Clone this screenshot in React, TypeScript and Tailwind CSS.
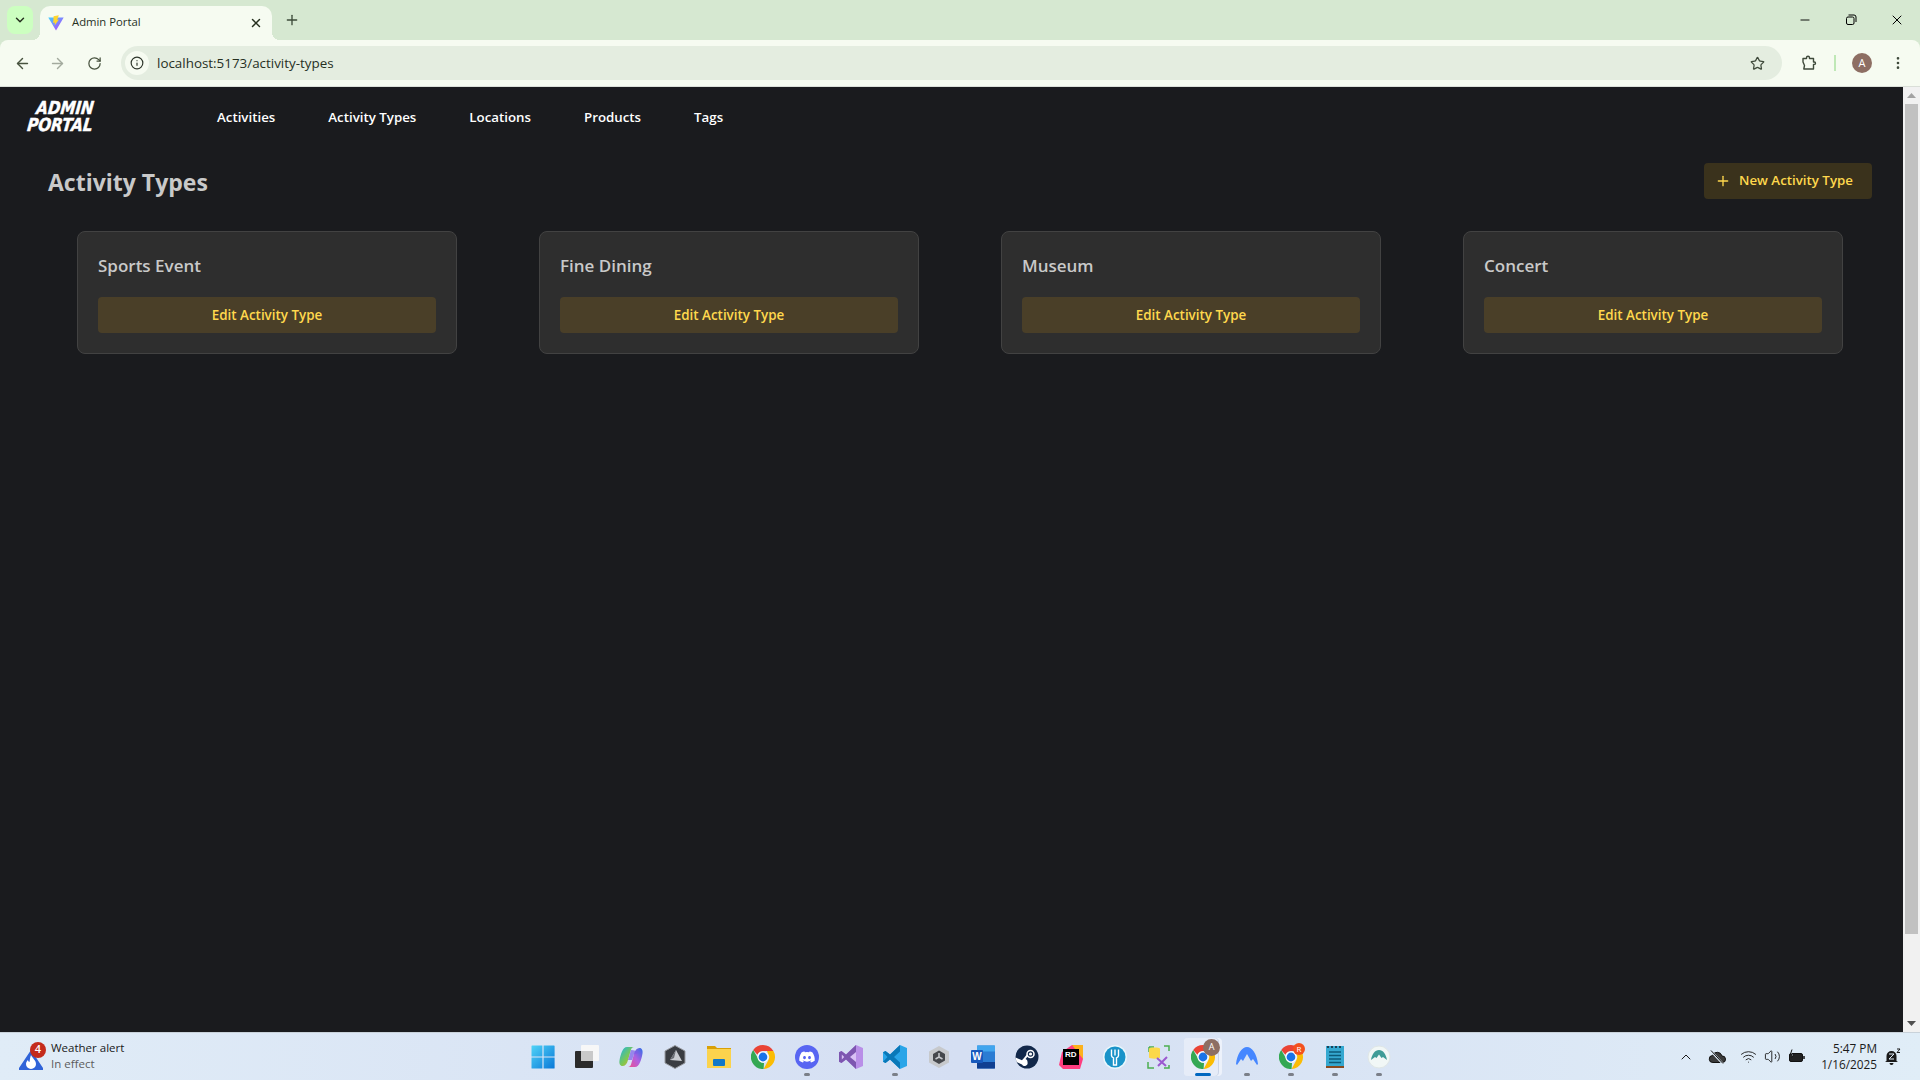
import type { ReactNode } from 'react';
import { ArrowLeft, ArrowRight, ChevronDown, ChevronUp, EllipsisVertical, Info, Minus, Plus, RotateCw, Star, Volume2, Wifi, X } from 'lucide-react';

const activityTypes = ['Sports Event', 'Fine Dining', 'Museum', 'Concert'];
const navItems = ['Activities', 'Activity Types', 'Locations', 'Products', 'Tags'];

function ViteIcon() {
  return (
    <svg width="16" height="16" viewBox="0 0 16 16">
      <defs>
        <linearGradient id="vite-a" x1="0" y1="0" x2="1" y2="1">
          <stop offset="0" stopColor="#41d1ff" />
          <stop offset="1" stopColor="#bd34fe" />
        </linearGradient>
      </defs>
      <path d="M0.3 2.4 L15.7 2.4 L8 15.6 Z" fill="url(#vite-a)" />
      <path d="M10.8 0.2 L5.6 1.2 L5.2 8 L7 7.6 L6.6 10.6 L11 4.6 L9.2 5 Z" fill="#ffd62e" />
    </svg>
  );
}

function ChromeIcon({ size = 24 }: { size?: number }) {
  return (
    <svg width={size} height={size} viewBox="0 0 24 24">
      <path d="M12 0a12 12 0 0 1 10.4 6H12a6 6 0 0 0-5.6 3.8L2.2 5A12 12 0 0 1 12 0z" fill="#ea4335" />
      <path d="M22.4 6A12 12 0 0 1 12.6 24l4.6-8.6A6 6 0 0 0 17 8.6L16 6z" fill="#fbbc04" />
      <path d="M12.6 24A12 12 0 0 1 2.2 5l4.9 8.6A6 6 0 0 0 13 18z" fill="#34a853" />
      <circle cx="12" cy="12" r="5.6" fill="#fff" />
      <circle cx="12" cy="12" r="4.4" fill="#1a73e8" />
    </svg>
  );
}

function TaskIcon({ children, dot, active }: { children: ReactNode; dot?: boolean; active?: boolean }) {
  return (
    <div className="relative flex h-[44px] w-[44px] items-center justify-center">
      {active && (
        <>
          <span className="absolute left-[3px] top-[3px] h-[38px] w-[38px] rounded-[4px] bg-[#edf2fb]" />
          <span className="absolute left-[3px] top-[3px] h-[38px] w-[34px] rounded-[4px] bg-[#e6ecf8] shadow-[1px_0_0_#ccd5e8]" />
        </>
      )}
      <div className="relative flex">{children}</div>
      {dot && <span className="absolute bottom-[3px] h-[3px] w-[6px] rounded-full bg-[#7b7f88]" />}
      {active && <span className="absolute bottom-[3px] h-[3px] w-[16px] rounded-full bg-[#0067c0]" />}
    </div>
  );
}

function TaskbarIcons() {
  return (
    <div className="flex items-center">
      <TaskIcon>
        <svg width="24" height="24" viewBox="0 0 24 24">
          <defs>
            <linearGradient id="win" x1="0" y1="0" x2="1" y2="1">
              <stop offset="0" stopColor="#4fd3f7" />
              <stop offset="1" stopColor="#0a78d8" />
            </linearGradient>
          </defs>
          <path d="M0.5 1a.6.6 0 0 1 .6-.6H11.4V11.4H0.5zM12.6 0.4H23a.6.6 0 0 1 .6.6V11.4H12.6zM0.5 12.6H11.4V23.6H1.1a.6.6 0 0 1-.6-.6zM12.6 12.6H23.6V23a.6.6 0 0 1-.6.6H12.6z" fill="url(#win)" />
        </svg>
      </TaskIcon>
      <TaskIcon>
        <svg width="24" height="24" viewBox="0 0 24 24">
          <rect x="0" y="6" width="18" height="17" rx="1" fill="#2b2b2b" />
          <rect x="6" y="0" width="18" height="16" rx="1" fill="#f7f7f7" />
          <rect x="6" y="6" width="12" height="10" fill="#c9c9c9" />
        </svg>
      </TaskIcon>
      <TaskIcon>
        <svg width="24" height="24" viewBox="0 0 24 24">
          <defs>
            <linearGradient id="cop" x1="0" y1="0" x2="1" y2="1">
              <stop offset="0" stopColor="#19b5e8" />
              <stop offset="0.55" stopColor="#7ec850" />
              <stop offset="1" stopColor="#f0a030" />
            </linearGradient>
            <linearGradient id="cop2" x1="1" y1="0" x2="0" y2="1">
              <stop offset="0" stopColor="#2f6fe8" />
              <stop offset="0.5" stopColor="#b060e0" />
              <stop offset="1" stopColor="#f0508c" />
            </linearGradient>
          </defs>
          <path d="M8 2h7c-1.500 0-2.500 1-3 2.500L9 15c-1 4-3 6-5.500 6C1 21 0 18.500 0.500 15.500 1.500 10 3.500 2 8 2z" fill="url(#cop)" />
          <path d="M16 22H9c1.500 0 2.500-1 3-2.500L15 9c1-4 3-6 5.500-6C23 3 24 5.500 23.500 8.500 22.500 14 20.500 22 16 22z" fill="url(#cop2)" />
          <path d="M12 5c3 0 6 1 8 3l-5 1-2 6h-4z" fill="#7a5ce8" opacity="0.7" />
        </svg>
      </TaskIcon>
      <TaskIcon>
        <svg width="24" height="24" viewBox="0 0 24 24">
          <path d="M12 0.5 22 6v12l-10 5.500L2 18V6z" fill="#3a3d42" stroke="#9a9da3" />
          <path d="M13 5 19 16 7 15z" fill="#c9ccd1" />
          <path d="M13 5 11 13 7 15z" fill="#6b6e74" />
        </svg>
      </TaskIcon>
      <TaskIcon>
        <svg width="24" height="24" viewBox="0 0 24 24">
          <path d="M0 1h8l2 2h14v5H0z" fill="#d9a006" />
          <rect x="0" y="4" width="24" height="19" fill="#fbd34d" />
          <rect x="6" y="14" width="12" height="7" rx="1" fill="#1178c8" />
        </svg>
      </TaskIcon>
      <TaskIcon>
        <ChromeIcon />
      </TaskIcon>
      <TaskIcon dot>
        <svg width="24" height="24" viewBox="0 0 24 24">
          <circle cx="12" cy="12" r="12" fill="#5865f2" />
          <path d="M17.500 7.400a12 12 0 0 0-3-.9l-.4.8a11 11 0 0 0-4.200 0l-.4-.8a12 12 0 0 0-3 .9C4.600 10.300 4.100 13 4.300 15.700a12 12 0 0 0 3.700 1.900l.8-1.300-1.200-.6.3-.2a8.500 8.500 0 0 0 8.200 0l.3.2-1.200.6.8 1.300a12 12 0 0 0 3.700-1.900c.3-3.100-.5-5.800-2.200-8.300zM9.500 14.200c-.8 0-1.400-.7-1.400-1.600s.6-1.600 1.400-1.600 1.500.7 1.400 1.600c0 .9-.6 1.600-1.400 1.600zm5 0c-.8 0-1.400-.7-1.400-1.600s.6-1.600 1.400-1.600 1.500.7 1.400 1.600c0 .9-.6 1.600-1.400 1.600z" fill="#fff" />
        </svg>
      </TaskIcon>
      <TaskIcon>
        <svg width="24" height="24" viewBox="0 0 24 24">
          <path d="M17 0 24 3v18l-7 3L7 14.500 2.500 18 0 16.800V7.200L2.500 6 7 9.500z" fill="#b98fe8" />
          <path d="M17 0v24L7 14.500 2.500 18 0 16.800V7.200L2.500 6 7 9.500z" fill="#7d56b0" />
          <path d="M17 7v10l-6-5z" fill="#d9c1f5" />
          <path d="M2.800 9.500v5l2.400-2.500z" fill="#d9c1f5" />
        </svg>
      </TaskIcon>
      <TaskIcon dot>
        <svg width="24" height="24" viewBox="0 0 24 24">
          <path d="M17 0 24 3v18l-7 3L7 14.500 2.500 18 0 16.800V7.200L2.500 6 7 9.500z" fill="#2aa5e8" />
          <path d="M17 0v6.500L11 12l6 5.500V24L7 14.500 2.500 18 0 16.800 4.500 12 0 7.200 2.500 6 7 9.500z" fill="#0a78b8" />
        </svg>
      </TaskIcon>
      <TaskIcon>
        <svg width="24" height="24" viewBox="0 0 24 24">
          <path d="M12 1 22 6.500v11L12 23 2 17.500v-11z" fill="#c7c9cc" />
          <path d="M12 5.500 18 9v6.500L12 19l-6-3.500V9z" fill="#46484c" />
          <path d="M12 8v4l3.500 2M12 12l-3.500 2" stroke="#c7c9cc" strokeWidth="1.500" fill="none" />
        </svg>
      </TaskIcon>
      <TaskIcon>
        <svg width="24" height="24" viewBox="0 0 24 24">
          <rect x="6" y="0.500" width="18" height="23" rx="1" fill="#2b7cd3" />
          <rect x="6" y="0.500" width="18" height="6" fill="#41a5ee" />
          <rect x="6" y="17" width="18" height="6.500" fill="#103f91" />
          <rect x="0" y="5" width="12" height="13" rx="1" fill="#185abd" />
          <text x="6" y="15" textAnchor="middle" fontSize="10" fontWeight="700" fontFamily="Liberation Sans" fill="#fff">W</text>
        </svg>
      </TaskIcon>
      <TaskIcon>
        <svg width="24" height="24" viewBox="0 0 24 24">
          <circle cx="12" cy="12" r="11.500" fill="#12284a" />
          <circle cx="15.500" cy="9" r="3.500" fill="none" stroke="#fff" strokeWidth="1.500" />
          <circle cx="15.500" cy="9" r="1.600" fill="#fff" />
          <path d="M0.500 12.500 7 15.200a3 3 0 0 1 5.500 2A3 3 0 0 1 7 19.500L1.500 17z" fill="#fff" />
          <path d="M9 14.500 12.500 10" stroke="#fff" strokeWidth="2" />
        </svg>
      </TaskIcon>
      <TaskIcon>
        <div className="relative h-[24px] w-[24px]">
          <svg width="24" height="24" viewBox="0 0 24 24" className="absolute">
            <path d="M3 7 13 0h11v14l-3 10H4L0 20z" fill="#ff3d7f" />
            <path d="M13 0h11v14z" fill="#fcb11d" />
            <rect x="4" y="4" width="16" height="16" fill="#000" />
          </svg>
          <span className="absolute left-[6px] top-[4px] text-[8px] font-bold leading-[11px] text-white [font-family:'Liberation_Sans',sans-serif]">RD</span>
        </div>
      </TaskIcon>
      <TaskIcon>
        <svg width="24" height="24" viewBox="0 0 24 24">
          <circle cx="12" cy="12" r="12" fill="#e8f6fc" />
          <circle cx="12" cy="12" r="10.500" fill="#1993c9" />
          <path d="M8.500 4.500v6c0 1.200 1 2 2 2.300V20h3v-7.200c1-.3 2-1.100 2-2.300v-6M12 4.500v6" stroke="#fff" strokeWidth="1.400" fill="none" />
        </svg>
      </TaskIcon>
      <TaskIcon>
        <svg width="24" height="24" viewBox="0 0 24 24">
          <path d="M2 2h5M2 2v5M17 1h5v5M1 17v6h6M17 23h5v-3" stroke="#4caf50" strokeWidth="1.500" fill="none" />
          <path d="M2 3.500c0-1.500 11-1.500 11 0v9c0 1.500-11 1.500-11 0z" fill="#fbd84a" />
          <path d="M10 13l9 8M20 12l-9 9" stroke="#9b59d0" strokeWidth="2" />
        </svg>
      </TaskIcon>
      <TaskIcon active>
        <ChromeIcon />
        <span className="absolute right-[-5px] top-[-6px] flex h-[17px] w-[17px] items-center justify-center rounded-full bg-[#8d6e63] text-[9px] text-white">A</span>
      </TaskIcon>
      <TaskIcon dot>
        <svg width="24" height="24" viewBox="0 0 24 24">
          <path d="M1 19C2 9 7 2 12 2s10 7 11 17l-1 1-4-6-2 2-4-7-4 7-2-2-4 6z" fill="#4687ff" />
        </svg>
      </TaskIcon>
      <TaskIcon dot>
        <ChromeIcon />
        <span className="absolute right-[-2px] top-[-2px] flex h-[12px] w-[12px] items-center justify-center rounded-full bg-[#f4511e] text-[8px] text-white">R</span>
      </TaskIcon>
      <TaskIcon dot>
        <svg width="24" height="24" viewBox="0 0 24 24">
          <rect x="3" y="1" width="18" height="21" fill="#35a8d0" />
          <rect x="3" y="21" width="18" height="2" fill="#8a4b20" />
          <path d="M6 7h12M6 10.500h12M6 14h12M6 17.500h12" stroke="#0c5a78" strokeWidth="1.300" />
          <path d="M5 1v2M9 1v2M13 1v2M17 1v2" stroke="#123" strokeWidth="1.500" />
        </svg>
      </TaskIcon>
      <TaskIcon dot>
        <svg width="24" height="24" viewBox="0 0 24 24">
          <circle cx="12" cy="12" r="11" fill="#f1f7f6" stroke="#dfe6e6" />
          <path d="M4 15C5 9 8 5 12 5s7 4 8 10l-4-3-1.500 1L12 9.500 9.500 13 8 12z" fill="#3f9c97" />
        </svg>
      </TaskIcon>
    </div>
  );
}

function BrowserChrome() {
  return (
    <div className="flex h-[87px] shrink-0 flex-col bg-[#d6e8d1] [font-family:'Open_Sans',sans-serif]">
      <div className="flex h-[40px] shrink-0 items-start">
        <div className="ml-[7px] mt-[6px] flex h-[28px] w-[26px] items-center justify-center rounded-[8px] bg-[#ccffc0]">
          <ChevronDown size={14} strokeWidth={2.5} color="#26301f" />
        </div>
        <div className="relative ml-[7px] mt-[6px] flex h-[34px] w-[232px] items-center rounded-t-[10px] bg-[#f6fbf1] pl-[8px] pr-[9px]">
          <span className="absolute bottom-0 left-[-8px] h-[8px] w-[8px] bg-[radial-gradient(circle_at_0_0,transparent_8px,#f6fbf1_8px)]" />
          <span className="absolute bottom-0 right-[-8px] h-[8px] w-[8px] bg-[radial-gradient(circle_at_100%_0,transparent_8px,#f6fbf1_8px)]" />
          <ViteIcon />
          <span className="-mt-[2px] ml-[8px] flex-1 text-[11.3px] text-[#26301f]">Admin Portal</span>
          <X size={14} strokeWidth={2.5} color="#26301f" />
        </div>
        <div className="ml-[6px] mt-[6px] flex h-[28px] w-[28px] items-center justify-center">
          <Plus size={16} strokeWidth={2} color="#3c4a38" />
        </div>
        <div className="ml-auto flex h-[40px] items-center text-black">
          <div className="flex w-[46px] justify-center"><Minus size={14} strokeWidth={1.6} /></div>
          <div className="flex w-[46px] justify-center">
            <svg width="12" height="12" viewBox="0 0 12 12" fill="none" stroke="#000">
              <rect x="1.5" y="3" width="7.5" height="7.5" rx="1.5" />
              <path d="M3.5 1h5.500a2 2 0 0 1 2 2v5" />
            </svg>
          </div>
          <div className="flex w-[46px] justify-center"><X size={16} strokeWidth={1.5} /></div>
        </div>
      </div>
      <div className="flex h-[47px] items-center rounded-t-[8px] border-b border-[#dadfd8] bg-[#f6fbf1] pl-[8px]">
        <div className="flex w-[28px] justify-center"><ArrowLeft size={17} color="#48533f" /></div>
        <div className="ml-[7px] flex w-[28px] justify-center"><ArrowRight size={17} color="#a3aa9e" /></div>
        <div className="ml-[8px] flex w-[30px] justify-center"><RotateCw size={15} color="#48533f" /></div>
        <div className="ml-[12px] flex h-[34px] w-[1661px] items-center rounded-full bg-[#e4ede0] pl-[4px]">
          <div className="flex h-[24px] w-[24px] items-center justify-center rounded-full bg-[#f6fbf1]">
            <Info size={14} color="#2d352a" />
          </div>
          <span className="ml-[8px] flex-1 text-[13.4px] text-[#26301f]">localhost:5173/activity-types</span>
          <Star size={15} color="#3f4a3b" className="mr-[17px]" />
        </div>
        <div className="ml-[18px] flex w-[18px] justify-center">
          <svg width="16" height="16" viewBox="0 0 16 16" fill="none" stroke="#3f4a3b" strokeWidth="1.400" strokeLinejoin="round">
            <path d="M2 3.500h3.500V2.800a1.500 1.500 0 0 1 3 0v.7H12.500V7h.8a1.200 1.200 0 0 1 0 2.400h-.8V14H2.800l.7-3.500L2 7z" />
          </svg>
        </div>
        <div className="ml-[16px] h-[16px] w-[2px] bg-[#bfe8b6]" />
        <div className="ml-[16px] flex h-[20px] w-[20px] items-center justify-center rounded-full bg-[#8d6e63] text-[11px] text-white">A</div>
        <div className="ml-[17px] flex w-[18px] justify-center"><EllipsisVertical size={16} color="#3f4a3b" /></div>
      </div>
    </div>
  );
}

function Logo() {
  return (
    <div className="flex w-[68px] -skew-x-6 flex-col items-center text-[18px] font-bold italic leading-[17px] text-white [-webkit-text-stroke:0.5px_white] [font-family:'DejaVu_Sans',sans-serif]">
      <span className="ml-[6px] scale-x-[0.84]">ADMIN</span>
      <span className="scale-x-[0.84]">PORTAL</span>
    </div>
  );
}

function AdminPage() {
  return (
    <div className="flex min-w-0 flex-1 flex-col bg-[#1a1b1e] [font-family:'Open_Sans',sans-serif]">
      <header className="flex h-[58px] items-center pl-[27px]">
        <Logo />
        <nav className="ml-[122px] mt-[3px] flex gap-[53px] text-[13.3px] font-semibold text-white">
          {navItems.map(item => (
            <span key={item}>{item}</span>
          ))}
        </nav>
      </header>
      <div className="mt-[18px] flex h-[36px] items-center justify-between pl-[48px] pr-[31px]">
        <h1 className="mt-[3px] text-[23px] font-bold text-[#c9c9c9]">Activity Types</h1>
        <button className="flex h-[36px] w-[168px] items-center gap-[8px] rounded-[4px] bg-[#3a321c] pl-[11px] text-[13.3px] font-semibold text-[#ffd84d]">
          <Plus size={16} strokeWidth={2} />
          New Activity Type
        </button>
      </div>
      <div className="mt-[32px] grid grid-cols-4 gap-[82px] pl-[77px] pr-[60px]">
        {activityTypes.map(name => (
          <div key={name} className="flex h-[123px] flex-col rounded-[8px] border border-[#424242] bg-[#2e2e2e] p-[20px]">
            <h2 className="text-[17px] font-semibold leading-[28px] text-[#c9c9c9]">{name}</h2>
            <button className="mt-[17px] h-[36px] rounded-[4px] bg-[#4a3f28] text-[13.4px] font-semibold text-[#ffd84d]">
              Edit Activity Type
            </button>
          </div>
        ))}
      </div>
    </div>
  );
}

function Scrollbar() {
  return (
    <div className="flex w-[17px] shrink-0 flex-col items-center bg-[#f1f1f1]">
      <div className="flex h-[17px] items-center justify-center">
        <svg width="9" height="5" viewBox="0 0 9 5"><path d="M4.500 0 9 5H0z" fill="#a3a3a3" /></svg>
      </div>
      <div className="h-[830px] w-[13px] bg-[#c1c1c1]" />
      <div className="mt-auto flex h-[17px] items-center justify-center">
        <svg width="9" height="5" viewBox="0 0 9 5"><path d="M0 0h9L4.500 5z" fill="#505050" /></svg>
      </div>
    </div>
  );
}

function Taskbar() {
  return (
    <div className="flex h-[48px] shrink-0 items-center border-t border-[#c9d2da] bg-gradient-to-r from-[#e0ecf7] via-[#d5dff3] to-[#e0edf7] [font-family:'Open_Sans',sans-serif]">
      <div className="flex w-[521px] items-center pl-[19px]">
        <div className="relative h-[30px] w-[32px]">
          <svg width="24" height="20" viewBox="0 0 24 20" className="absolute left-0 top-[8px]">
            <path d="M12 0 24 18a1 1 0 0 1-1 2H1a1 1 0 0 1-1-2z" fill="#2f63d8" />
            <path d="M12 5c1 3 5 5 5 9a5 5 0 0 1-10 0c0-2 1-3 2-4 0 1 1 2 1.500 2C11 10 11 7 12 5z" fill="#fff" />
          </svg>
          <span className="absolute left-[11px] top-0 flex h-[16px] w-[16px] items-center justify-center rounded-full bg-[#c42b1c] text-[11px] font-semibold text-white">4</span>
        </div>
        <div className="-mt-[2px] flex flex-col text-[11.5px] leading-[16px]">
          <span className="text-[#1a1a1a]">Weather alert</span>
          <span className="text-[#5c5c5c]">In effect</span>
        </div>
      </div>
      <TaskbarIcons />
      <div className="ml-auto flex items-center text-[#1a1a1a]">
        <ChevronUp size={16} strokeWidth={1.5} />
        <svg width="18" height="16" viewBox="0 0 18 16" className="ml-[14px]" fill="#3a3a3a" stroke="#111">
          <path d="M5 13.5a3.500 3.500 0 0 1-.5-7A5 5 0 0 1 14 7a3 3 0 0 1 .5 6.500z" />
          <path d="M3 2 15 15" stroke="#e0ecf7" strokeWidth="2" />
          <path d="M3 1.500 15 14.500" />
        </svg>
        <Wifi size={17} strokeWidth={1.3} className="ml-[14px]" />
        <Volume2 size={17} strokeWidth={1.3} className="ml-[7px]" />
        <svg width="18" height="16" viewBox="0 0 18 16" className="ml-[7px]" fill="none" stroke="#111">
          <rect x="1.5" y="4.5" width="13" height="8" rx="1.5" fill="#222" />
          <path d="M16 7v3" strokeWidth="1.5" />
          <path d="M4 0.500 2.500 5h3L4 9" stroke="#111" fill="#e0ecf7" />
        </svg>
        <div className="-mt-[2px] ml-[15px] flex w-[56px] flex-col items-end text-[11.8px] leading-[16px] text-[#1a1a1a]">
          <span>5:47 PM</span>
          <span>1/16/2025</span>
        </div>
        <svg width="16" height="18" viewBox="0 0 16 18" className="ml-[8px] mr-[19px]" fill="#1a1a1a">
          <path d="M1.500 13V8a5 5 0 0 1 10 0v5l1.500 1H0zM4.500 15h4a2 2 0 0 1-4 0z" />
          <path d="M4 6h5L4 11h5" stroke="#e0ecf7" strokeWidth="1" fill="none" />
          <path d="M12 1h3l-3 3.500h3" stroke="#1a1a1a" strokeWidth="1" fill="none" />
        </svg>
      </div>
    </div>
  );
}

export default function App() {
  return (
    <div className="flex h-screen w-full flex-col overflow-hidden">
      <BrowserChrome />
      <div className="flex min-h-0 flex-1">
        <AdminPage />
        <Scrollbar />
      </div>
      <Taskbar />
    </div>
  );
}
